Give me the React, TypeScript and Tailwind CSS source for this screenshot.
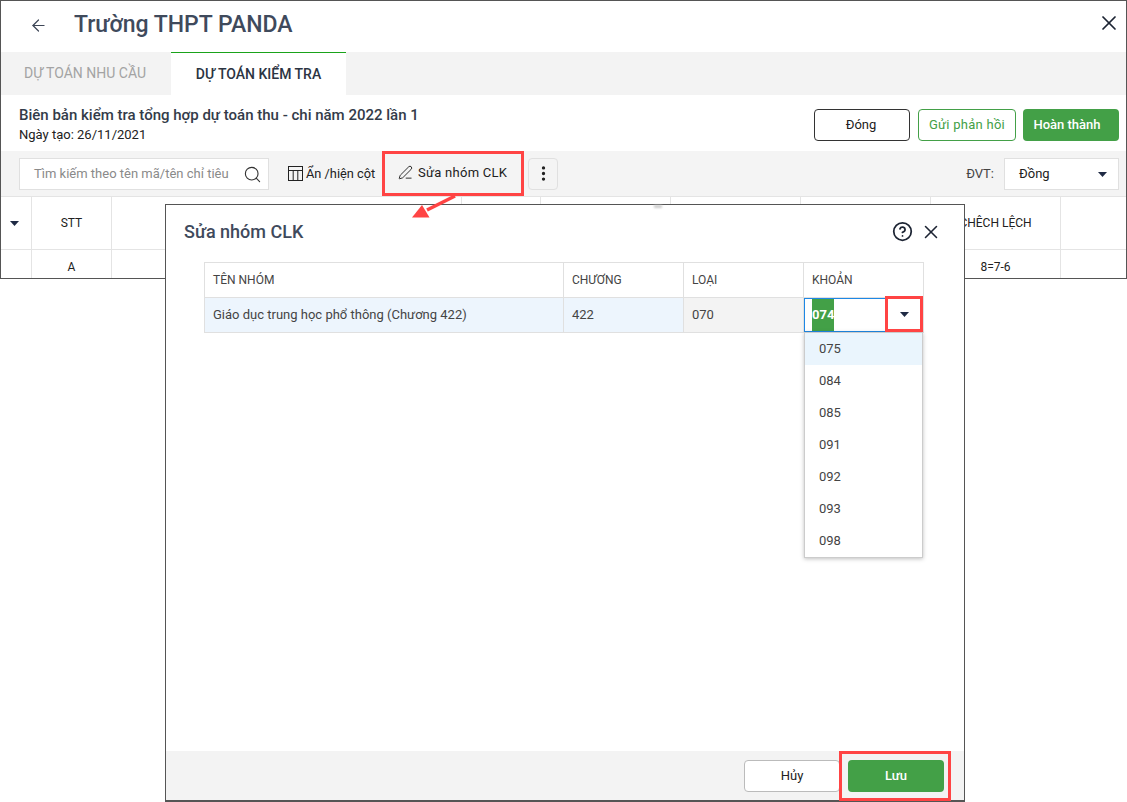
import { ArrowLeft, CircleHelp, EllipsisVertical, PenLine, Search, X } from 'lucide-react';

const Caret = ({ className = '' }: { className?: string }) => (
  <svg width="9" height="5" viewBox="0 0 9 5" className={className}>
    <path d="M0 0h9L4.5 5z" fill="#1f2a44" />
  </svg>
);

const TableIcon = () => (
  <svg width="15" height="15" viewBox="0 0 15 15" fill="none" stroke="#222" strokeWidth="1">
    <rect x="0.5" y="0.5" width="14" height="14" />
    <path d="M0.5 4.5h14M5.2 4.5v10M9.8 4.5v10" />
  </svg>
);

const columns = [
  { w: 'w-[31px]', head: <Caret className="mr-[3px]" />, cell: '' },
  { w: 'w-[80px]', head: 'STT', cell: 'A' },
  { w: 'w-[350px]', head: '', cell: '' },
  { w: 'w-[79px]', head: '', cell: '' },
  { w: 'w-[130px]', head: '', cell: '' },
  { w: 'w-[130px]', head: '', cell: '' },
  { w: 'w-[130px]', head: '', cell: '' },
  { w: 'w-[130px]', head: 'CHÊCH LỆCH', cell: '8=7-6' },
  { w: 'flex-1', head: '', cell: '' },
];

const options = ['075', '084', '085', '091', '092', '093', '098'];

const App = () => {
  return (
    <div className="relative h-[802px] w-[1127px] overflow-hidden bg-white font-['Roboto',sans-serif] text-[13px] text-[#212121]">
      {/* main window behind the dialog */}
      <div className="h-[279px] overflow-hidden border border-[#555]">
        <div className="flex h-[51px] items-center pb-[3px] pl-[28px] pr-[5px]">
          <ArrowLeft size={19} strokeWidth={1.5} className="text-[#3d4656]" />
          <h1 className="ml-[26px] text-[23px] font-medium text-[#3f4a5c]">Trường THPT PANDA</h1>
          <X size={24} strokeWidth={1.7} className="mb-[4px] ml-auto text-[#1c2433]" />
        </div>
        <div className="flex h-[43px] bg-[#f3f3f3]">
          <div className="flex w-[170px] items-center justify-center pr-[2px] text-[14px] text-[#a3a3a3]">DỰ TOÁN NHU CẦU</div>
          <div className="flex w-[175px] items-center justify-center border-t border-[#1aa31a] bg-white text-[14px] font-medium text-[#2b3442]">
            DỰ TOÁN KIỂM TRA
          </div>
        </div>
        <div className="flex h-[56px] items-center justify-between pl-[18px] pr-[7px]">
          <div>
            <div className="pt-[2px] text-[15px] font-medium leading-[20px] text-[#333b49]">
              Biên bản kiểm tra tổng hợp dự toán thu - chi năm 2022 lần 1
            </div>
            <div className="mt-[1px] leading-[18px]">Ngày tạo: 26/11/2021</div>
          </div>
          <div className="mt-[3px] flex gap-2">
            <button className="h-[32px] w-[96px] rounded-[4px] border border-[#333] pr-[2px]">Đóng</button>
            <button className="h-[32px] w-[98px] rounded-[4px] border border-[#43a047] tracking-[0.02em] text-[#43a047]">Gửi phản hồi</button>
            <button className="ml-[-1px] h-[32px] w-[96px] rounded-[4px] bg-[#43a047] pr-[8px] font-medium text-white">Hoàn thành</button>
          </div>
        </div>
        <div className="flex h-[45px] items-center bg-[#f4f4f4] pl-[18px] pr-[7px]">
          <div className="flex h-[32px] w-[250px] items-center justify-between border border-[#e0e0e0] bg-white pl-[14px] pr-[6px] pt-[1px] text-[#8a8a8a]">
            <span>Tìm kiếm theo tên mã/tên chỉ tiêu</span>
            <Search size={19} strokeWidth={1.4} className="text-[#333]" />
          </div>
          <div className="ml-[19px] flex w-[95px] items-center gap-[3px] text-[12.8px]">
            <TableIcon />
            <span>Ẩn /hiện cột</span>
          </div>
          <button className="ml-[-1px] flex h-[45px] w-[142px] items-center gap-[5px] border-[3px] border-[#f44] pb-[2px] pl-[13px] tracking-[0.02em]">
            <PenLine size={15} strokeWidth={1.5} className="text-[#222]" />
            <span>Sửa nhóm CLK</span>
          </button>
          <button className="ml-[4px] flex h-[32px] w-[30px] items-center justify-center rounded-[4px] border border-[#e0e0e0]">
            <EllipsisVertical size={19} strokeWidth={2.2} />
          </button>
          <span className="ml-auto text-[#444]">ĐVT:</span>
          <div className="ml-[10px] flex h-[32px] w-[115px] items-center justify-between border border-[#e0e0e0] bg-white pl-[14px] pr-[11px] pt-[1px]">
            <span>Đồng</span>
            <Caret />
          </div>
        </div>
        <div className="border-t border-[#e4e4e4] text-[12px]">
          <div className="flex h-[53px] border-b border-[#e4e4e4]">
            {columns.map((c, i) => (
              <div key={i} className={`${c.w} flex items-center justify-center border-r border-[#e4e4e4] last:border-r-0`}>
                {c.head}
              </div>
            ))}
          </div>
          <div className="flex h-[30px]">
            {columns.map((c, i) => (
              <div key={i} className={`${c.w} flex items-center justify-center border-r border-[#e4e4e4] pt-[3px] last:border-r-0`}>
                {c.cell}
              </div>
            ))}
          </div>
        </div>
      </div>

      {/* arrow from the toolbar button to the dialog */}
      <svg width="60" height="30" viewBox="0 0 60 30" className="absolute left-[405px] top-[192px] z-20">
        <path d="M50 4L22 18" stroke="#f44" strokeWidth="3.5" fill="none" />
        <path d="M7 25.5L17 13L24.5 25.5z" fill="#f44" />
      </svg>

      {/* dialog */}
      <div className="absolute left-[165px] top-[204px] z-10 flex h-[598px] w-[800px] flex-col border border-b-2 border-[#555] bg-white">
        <div className="absolute left-[488px] top-0 h-[3px] w-[8px] bg-[#ccc] blur-[1px]" />
        <div className="flex h-[57px] items-center pb-[4px] pl-[18px] pr-[22px]">
          <h2 className="text-[18px] font-medium text-[#3f4a5c]">Sửa nhóm CLK</h2>
          <CircleHelp size={21} strokeWidth={2} className="ml-auto text-[#1c2433]" />
          <X size={22} strokeWidth={1.7} className="ml-[7px] text-[#1c2433]" />
        </div>
        <div className="relative flex-1 px-[38px]">
          <div className="w-[720px] border border-[#e0e0e0] text-[#444]">
            <div className="flex h-[35px] items-center border-b border-[#e0e0e0] text-[12px]">
              <div className="flex h-full w-[359px] items-center border-r border-[#e0e0e0] pl-[8px]">TÊN NHÓM</div>
              <div className="flex h-full w-[120px] items-center border-r border-[#e0e0e0] pl-[8px]">CHƯƠNG</div>
              <div className="flex h-full w-[120px] items-center border-r border-[#e0e0e0] pl-[8px]">LOẠI</div>
              <div className="flex h-full flex-1 items-center pl-[8px]">KHOẢN</div>
            </div>
            <div className="flex h-[34px] items-center">
              <div className="flex h-full w-[359px] items-center border-r border-[#e0e0e0] bg-[#edf5fd] pl-[8px]">
                Giáo dục trung học phổ thông (Chương 422)
              </div>
              <div className="flex h-full w-[120px] items-center border-r border-[#e0e0e0] bg-[#edf5fd] pl-[8px]">422</div>
              <div className="flex h-full w-[120px] items-center border-r border-[#e0e0e0] bg-[#f3f3f3] pl-[8px]">070</div>
              <div className="flex h-full flex-1 border border-[#1e88e5] bg-white pl-[7px]">
                <span className="flex items-center bg-[#43a047] font-bold text-white">074</span>
              </div>
            </div>
          </div>
          {/* open options list */}
          <div className="absolute left-[638px] top-[70px] z-10 w-[119px] border border-[#ccc] bg-white text-[#444] shadow-[0_1px_4px_rgba(0,0,0,0.25)]">
            {options.map((o, i) => (
              <div key={o} className={`flex h-[32px] items-center pl-[14px] ${i === 0 ? 'bg-[#eaf5fd]' : ''}`}>
                {o}
              </div>
            ))}
          </div>
          {/* red highlight over the dropdown toggle */}
          <div className="absolute left-[719px] top-[34px] z-10 flex h-[36px] w-[38px] items-center justify-center border-[3px] border-[#f44]">
            <Caret className="ml-[1px]" />
          </div>
        </div>
        <div className="flex h-[49px] items-center justify-end gap-2 bg-[#f3f3f3] pr-[20px]">
          <button className="h-[32px] w-[96px] rounded-[4px] border border-[#bbb] bg-white">Hủy</button>
          <button className="h-[32px] w-[96px] rounded-[4px] bg-[#43a047] font-medium text-white">Lưu</button>
        </div>
      </div>
      {/* red highlight around the save button */}
      <div className="absolute left-[839px] top-[751px] z-20 h-[50px] w-[112px] border-[3px] border-[#f44]" />
    </div>
  );
};

export default App;
